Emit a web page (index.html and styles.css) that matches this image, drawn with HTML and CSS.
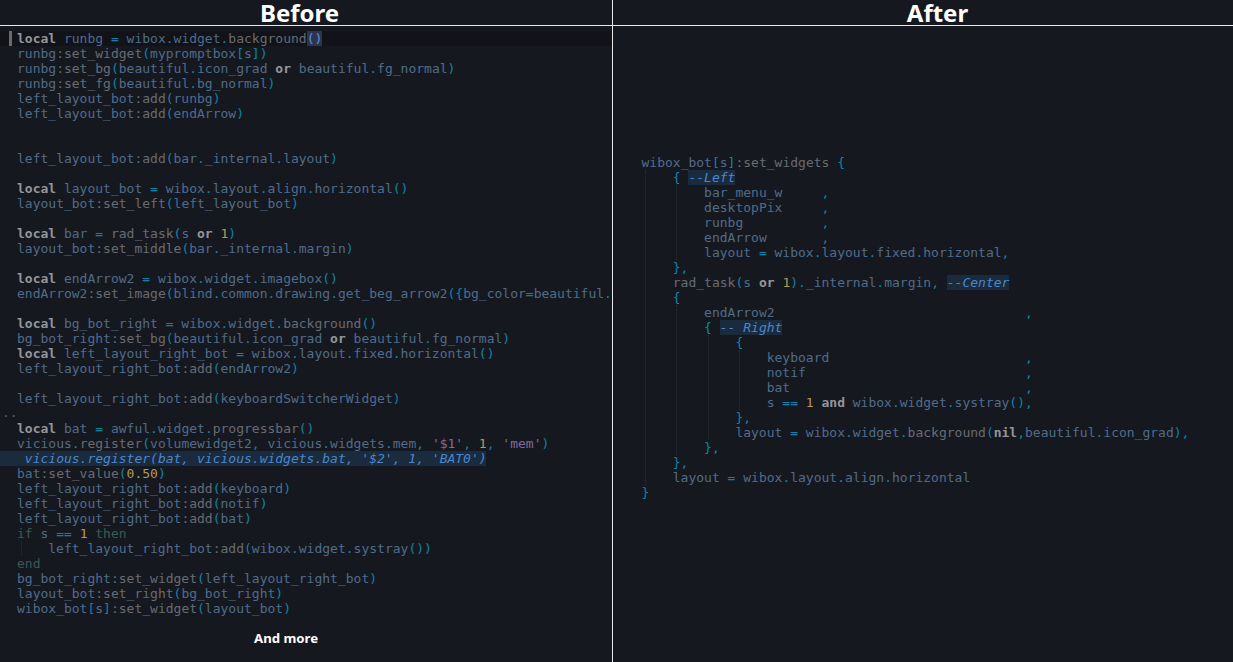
FILE: index.html
```html
<!DOCTYPE html>
<html lang="en">
<head>
<meta charset="utf-8">
<title>Before and After</title>
<link rel="stylesheet" href="styles.css">
</head>
<body>
<div class="page">
  <section class="pane pane-left">
    <h2 class="title title-before">Before</h2>
    <div class="code code-left">
      <div class="ln cur"><span class="caret"></span><span class="k">local</span> runbg <i class="c">=</i> wibox<i class="c">.</i>widget<i class="c">.</i><i class="f">background</i><span class="match">()</span></div>
      <div class="ln">runbg<i class="f">:set_widget</i><i class="c">(</i>mypromptbox<i class="c">[</i>s<i class="c">])</i></div>
      <div class="ln">runbg<i class="f">:set_bg</i><i class="c">(</i>beautiful<i class="c">.</i>icon_grad <span class="k">or</span> beautiful<i class="c">.</i>fg_normal<i class="c">)</i></div>
      <div class="ln">runbg<i class="f">:set_fg</i><i class="c">(</i>beautiful<i class="c">.</i>bg_normal<i class="c">)</i></div>
      <div class="ln">left_layout_bot<i class="f">:add</i><i class="c">(</i>runbg<i class="c">)</i></div>
      <div class="ln">left_layout_bot<i class="f">:add</i><i class="c">(</i>endArrow<i class="c">)</i></div>
      <div class="ln"></div>
      <div class="ln"></div>
      <div class="ln">left_layout_bot<i class="f">:add</i><i class="c">(</i>bar<i class="c">.</i>_internal<i class="c">.</i>layout<i class="c">)</i></div>
      <div class="ln"></div>
      <div class="ln"><span class="k">local</span> layout_bot <i class="c">=</i> wibox<i class="c">.</i>layout<i class="c">.</i>align<i class="c">.</i>horizontal<i class="c">()</i></div>
      <div class="ln">layout_bot<i class="f">:set_left</i><i class="c">(</i>left_layout_bot<i class="c">)</i></div>
      <div class="ln"></div>
      <div class="ln"><span class="k">local</span> bar <i class="c">=</i> <i class="f">rad_task</i><i class="c">(</i>s <span class="k">or</span> <i class="n">1</i><i class="c">)</i></div>
      <div class="ln">layout_bot<i class="f">:set_middle</i><i class="c">(</i>bar<i class="c">.</i>_internal<i class="c">.</i>margin<i class="c">)</i></div>
      <div class="ln"></div>
      <div class="ln"><span class="k">local</span> endArrow2 <i class="c">=</i> wibox<i class="c">.</i>widget<i class="c">.</i>imagebox<i class="c">()</i></div>
      <div class="ln">endArrow2<i class="f">:set_image</i><i class="c">(</i>blind<i class="c">.</i>common<i class="c">.</i>drawing<i class="c">.</i>get_beg_arrow2<i class="c">({</i>bg_color<i class="c">=</i>beautiful<i class="c">.</i></div>
      <div class="ln"></div>
      <div class="ln"><span class="k">local</span> bg_bot_right <i class="c">=</i> wibox<i class="c">.</i>widget<i class="c">.</i><i class="f">background</i><i class="c">()</i></div>
      <div class="ln">bg_bot_right<i class="f">:set_bg</i><i class="c">(</i>beautiful<i class="c">.</i>icon_grad <span class="k">or</span> beautiful<i class="c">.</i>fg_normal<i class="c">)</i></div>
      <div class="ln"><span class="k">local</span> left_layout_right_bot <i class="c">=</i> wibox<i class="c">.</i>layout<i class="c">.</i>fixed<i class="c">.</i>horizontal<i class="c">()</i></div>
      <div class="ln">left_layout_right_bot<i class="f">:add</i><i class="c">(</i>endArrow2<i class="c">)</i></div>
      <div class="ln"></div>
      <div class="ln">left_layout_right_bot<i class="f">:add</i><i class="c">(</i>keyboardSwitcherWidget<i class="c">)</i></div>
      <div class="ln"><span class="fold">..</span></div>
      <div class="ln"><span class="k">local</span> bat <i class="c">=</i> awful<i class="c">.</i>widget<i class="c">.</i><i class="f">progressbar</i><i class="c">()</i></div>
      <div class="ln">vicious<i class="c">.</i><i class="f">register</i><i class="c">(</i>volumewidget2<i class="c">,</i> vicious<i class="c">.</i>widgets<i class="c">.</i>mem<i class="c">,</i> <i class="s">'$1'</i><i class="c">,</i> <i class="n">1</i><i class="c">,</i> <i class="s">'mem'</i><i class="c">)</i></div>
      <div class="ln hl"> vicious.register(bat, vicious.widgets.bat, '$2', 1, 'BAT0')</div>
      <div class="ln">bat<i class="f">:set_value</i><i class="c">(</i><i class="n">0.50</i><i class="c">)</i></div>
      <div class="ln">left_layout_right_bot<i class="f">:add</i><i class="c">(</i>keyboard<i class="c">)</i></div>
      <div class="ln">left_layout_right_bot<i class="f">:add</i><i class="c">(</i>notif<i class="c">)</i></div>
      <div class="ln">left_layout_right_bot<i class="f">:add</i><i class="c">(</i>bat<i class="c">)</i></div>
      <div class="ln"><i class="g">if</i> s <i class="c">==</i> <i class="n">1</i> <i class="g">then</i></div>
      <div class="block"><div class="ln">left_layout_right_bot<i class="f">:add</i><i class="c">(</i>wibox<i class="c">.</i>widget<i class="c">.</i>systray<i class="c">())</i></div></div>
      <div class="ln"><i class="g">end</i></div>
      <div class="ln">bg_bot_right<i class="f">:set_widget</i><i class="c">(</i>left_layout_right_bot<i class="c">)</i></div>
      <div class="ln">layout_bot<i class="f">:set_right</i><i class="c">(</i>bg_bot_right<i class="c">)</i></div>
      <div class="ln">wibox_bot<i class="c">[</i>s<i class="c">]</i><i class="f">:set_widget</i><i class="c">(</i>layout_bot<i class="c">)</i></div>
    </div>
    <p class="more">And more</p>
  </section>
  <section class="pane pane-right">
    <h2 class="title title-after">After</h2>
    <div class="code code-right">
      <div class="ln">wibox_bot<i class="c">[</i>s<i class="c">]</i><i class="f">:set_widgets</i> <i class="c">{</i></div>
      <div class="block">
        <div class="ln"><i class="c">{</i> <span class="cm">--Left</span></div>
        <div class="block">
          <div class="ln">bar_menu_w     <i class="c">,</i></div>
          <div class="ln">desktopPix     <i class="c">,</i></div>
          <div class="ln">runbg          <i class="c">,</i></div>
          <div class="ln">endArrow       <i class="c">,</i></div>
          <div class="ln">layout <i class="c">=</i> wibox<i class="c">.</i>layout<i class="c">.</i>fixed<i class="c">.</i>horizontal<i class="c">,</i></div>
        </div>
        <div class="ln"><i class="c">},</i></div>
        <div class="ln"><i class="f">rad_task</i><i class="c">(</i>s <span class="k">or</span> <i class="n">1</i><i class="c">).</i>_internal<i class="c">.</i>margin<i class="c">,</i> <span class="cm">--Center</span></div>
        <div class="ln"><i class="c">{</i></div>
        <div class="block">
          <div class="ln">endArrow2                                <i class="c">,</i></div>
          <div class="ln"><i class="c">{</i> <span class="cm">-- Right</span></div>
          <div class="block">
            <div class="ln"><i class="c">{</i></div>
            <div class="block">
              <div class="ln">keyboard                         <i class="c">,</i></div>
              <div class="ln">notif                            <i class="c">,</i></div>
              <div class="ln">bat                              <i class="c">,</i></div>
              <div class="ln">s <i class="c">==</i> <i class="n">1</i> <span class="k">and</span> wibox<i class="c">.</i>widget<i class="c">.</i>systray<i class="c">(),</i></div>
            </div>
            <div class="ln"><i class="c">},</i></div>
            <div class="ln">layout <i class="c">=</i> wibox<i class="c">.</i>widget<i class="c">.</i><i class="f">background</i><i class="c">(</i><span class="k">nil</span><i class="c">,</i>beautiful<i class="c">.</i>icon_grad<i class="c">),</i></div>
          </div>
          <div class="ln"><i class="c">},</i></div>
        </div>
        <div class="ln"><i class="c">},</i></div>
        <div class="ln">layout <i class="c">=</i> wibox<i class="c">.</i>layout<i class="c">.</i>align<i class="c">.</i>horizontal</div>
      </div>
      <div class="ln"><i class="c">}</i></div>
    </div>
  </section>
</div>
</body>
</html>
```
FILE: styles.css
```css
* { box-sizing: border-box; }
html, body { margin: 0; height: 100%; background: #16181f; }
.page { display: grid; grid-template-columns: 613px 620px; height: 662px; overflow: hidden; }
.pane { min-width: 0; height: 662px; }
.pane-left { border-right: 1px solid #e8e8e8; }
.title {
  margin: 0; height: 26px; border-bottom: 1px solid #e8e8e8;
  font: 700 24px/25px "Noto Sans", sans-serif; color: #fff; text-align: center;
}
.title-before { padding-right: 13px; }
.title-after { padding-left: 29px; }
.code {
  font: 13px/15px "DejaVu Sans Mono", monospace;
  color: #4f6c8c;
  overflow: hidden;
}
.code i { font-style: normal; }
.code-left { padding-top: 5px; }
.code-right { padding: 129px 0 0 28.5px; }
.code-left > .ln, .code-left > .block { margin-left: 17px; }
.ln { height: 15px; white-space: pre; position: relative; }
.block {
  border-left: 1px dotted #2b2f37;
  margin-left: 3.5px;
  padding-left: 26.8px;
}
.code-left > .block { margin-left: 20.5px; }
.f { color: #686c72; }
.c { color: #0d84a6; }
.n { color: #b39a55; }
.s { color: #80699f; }
.g { color: #3a5a58; }
.k { font-weight: 700; color: #94959a; }
.code-left > .cur { margin-left: 0; padding-left: 17px; background: #111318; }
.caret { position: absolute; left: 9px; top: 0; width: 3px; height: 15px; background: #6a6a6a; }
.match { background: #2a3552; color: #6d8ad6; }
.fold { position: absolute; left: -15px; top: -1px; color: #555a60; }
.code-left > .hl {
  margin-left: 0; padding-left: 17px; width: 486px;
  background: #1a2b3d; color: #4c86cc; font-style: italic;
}
.cm { background: #1a2b3d; color: #4c86cc; font-style: italic; }
.more {
  margin: 15px 0 0 254px;
  font: 700 13.2px/15px "Noto Sans", sans-serif; color: #fff;
}
```
